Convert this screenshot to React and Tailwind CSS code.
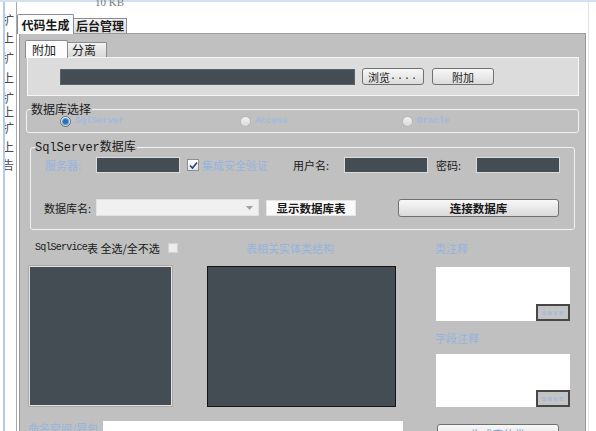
import React from "react";

function Radio({ checked }) {
  if (checked) {
    return (
      <span className="w-[11px] h-[11px] rounded-full border border-[#6b6f75] bg-linear-to-b from-[#f7f7f7] to-[#d2d2d2] flex items-center justify-center shrink-0">
        <span className="w-[5px] h-[5px] rounded-full bg-[#1f74c4] shadow-[0_0_0_1px_#5a9ad6]" />
      </span>
    );
  }
  return (
    <span className="w-[11px] h-[11px] rounded-full border border-[#b4b6b8] bg-linear-to-b from-[#f2f2f2] to-[#dadada] shrink-0" />
  );
}

function Save() {
  return (
    <div className="absolute right-0 bottom-0 w-[34px] h-[17px] border-2 border-[#474747] bg-[#c4c4c4] flex items-center justify-center font-['Liberation_Mono',monospace] text-[8px] font-bold tracking-[1px] text-[#9fbbe0]">
      save
    </div>
  );
}

const DarkBox = "bg-[#444d53]";

export default function App() {
  return (
    <div className="w-[596px] h-[431px] overflow-hidden bg-white flex flex-col font-['Noto_Sans_CJK_SC',sans-serif] text-[#1a1a1a]">
      <div className="h-[2px] bg-[#d4e2f0] shrink-0" />
      <div className="flex flex-1 min-h-0">
        {/* left strip of the window behind */}
        <div className="w-[17px] flex shrink-0">
          <div className="w-[3px]" />
          <div className="w-[2px] bg-[#b3cde8]" />
          <div className="w-[11px] overflow-hidden text-[12px] leading-[12px] text-[#4a4a4a] flex flex-col">
            <div className="mt-[12px] -ml-[3px]">扩</div>
            <div className="mt-[6px] -ml-[3px]">上</div>
            <div className="mt-[8px] -ml-[3px]">扩</div>
            <div className="mt-[8px] -ml-[3px]">上</div>
            <div className="mt-[8px] -ml-[3px]">扩</div>
            <div className="mt-[2px] -ml-[3px]">上</div>
            <div className="mt-[4px] -ml-[3px]">扩</div>
            <div className="mt-[7px] -ml-[3px]">上</div>
            <div className="mt-[6px] -ml-[3px]">告</div>
          </div>
          <div className="w-[1px] bg-[#a9a9a9]" />
        </div>

        {/* main */}
        <div className="w-[569px] flex flex-col shrink-0">
          <div className="h-[12px] shrink-0">
            <div className="ml-[78px] -mt-[6px] text-[11px] leading-[12px] text-[#7a7a7a] font-['Liberation_Serif',serif]">
              10 KB
            </div>
          </div>
          {/* outer tabs */}
          <div className="h-[19px] flex items-end relative z-10 shrink-0">
            <div className="w-[57px] h-[20px] -mb-px bg-[#fcfcfc] border border-b-0 border-[#898c95] rounded-t-[2px] flex items-center justify-center text-[12px] font-bold">
              代码生成
            </div>
            <div className="w-[53px] h-[15px] bg-linear-to-b from-[#f3f3f3] to-[#dcdcdc] border border-b-0 border-l-0 border-[#898c95] flex items-center justify-center text-[12px] font-bold">
              后台管理
            </div>
          </div>

          {/* panel */}
          <div className="ml-[2px] w-[567px] flex-1 bg-[#c0c0c0] border border-b-0 border-[#9a9a9a] flex flex-col text-[11px] leading-[14px]">
            {/* inner tab control */}
            <div className="mt-[6px] ml-[5px] flex flex-col">
              <div className="h-[17px] flex items-end relative z-10">
                <div className="w-[43px] h-[18px] -mb-px bg-[#fcfcfc] border border-b-0 border-[#898c95] rounded-t-[2px] flex items-center pl-[6px] text-[12px]">
                  附加
                </div>
                <div className="w-[39px] h-[15px] bg-linear-to-b from-[#f3f3f3] to-[#d8d8d8] border border-b-0 border-l-0 border-[#898c95] flex items-center pl-[4px] text-[12px]">
                  分离
                </div>
              </div>
              <div className="ml-[2px] w-[552px] h-[39px] bg-[#dcdcdc] border border-[#f7f7f7] flex items-center">
                <div className={`ml-[32px] w-[295px] h-[16px] ${DarkBox} border border-[#5b6368]`} />
                <div className="ml-[7px] w-[62px] h-[17px] rounded-[3px] border border-[#707070] bg-linear-to-b from-[#f7f7f7] to-[#dcdcdc] flex items-center justify-center text-[11px]">
                  浏览<span className="font-['Liberation_Mono',monospace] tracking-[1px] text-[10px]">....</span>
                </div>
                <div className="ml-[8px] w-[62px] h-[17px] rounded-[3px] border border-[#707070] bg-linear-to-b from-[#f7f7f7] to-[#dcdcdc] flex items-center justify-center text-[11px]">
                  附加
                </div>
              </div>
            </div>

            {/* group 1 */}
            <div className="mt-[13px] ml-[6px] w-[553px] h-[24px] relative border border-[#f2f2f2] rounded-[3px] flex items-center shrink-0">
              <div className="absolute left-[4px] -top-[8px] bg-[#c0c0c0] pr-[1px] text-[12px] leading-[14px]">
                数据库选择
              </div>
              <div className="ml-[33px] w-[180px] flex items-center">
                <Radio checked />
                <span className="ml-[4px] font-['Liberation_Mono',monospace] text-[9.5px] font-bold tracking-[-0.3px] text-[#9fbbe0]">SqlServer</span>
              </div>
              <div className="w-[162px] flex items-center">
                <Radio />
                <span className="ml-[4px] font-['Liberation_Mono',monospace] text-[9.5px] font-bold tracking-[-0.3px] text-[#9fbbe0]">Access</span>
              </div>
              <div className="flex items-center">
                <Radio />
                <span className="ml-[4px] font-['Liberation_Mono',monospace] text-[9.5px] font-bold tracking-[-0.3px] text-[#9fbbe0]">Oracle</span>
              </div>
            </div>

            {/* group 2 */}
            <div className="mt-[14px] ml-[10px] w-[545px] h-[83px] relative border border-[#f2f2f2] rounded-[3px] flex flex-col shrink-0">
              <div className="absolute left-[4px] -top-[9px] bg-[#c0c0c0] pr-[1px] text-[12px] leading-[14px] flex items-baseline">
                <span className="font-['Liberation_Mono',monospace]">SqlServer</span>
                <span>数据库</span>
              </div>
              <div className="mt-[9px] h-[16px] flex items-center">
                <span className="ml-[14px] w-[51px] text-[#94b4df]">服务器:</span>
                <div className={`w-[84px] h-[16px] ${DarkBox} border border-[#dcdcdc]`} />
                <div className="ml-[7px] w-[12px] h-[12px] border border-[#8e8f8f] bg-linear-to-b from-[#ffffff] to-[#e6e6e6] flex items-center justify-center">
                  <svg width="9" height="9" viewBox="0 0 9 9">
                    <path d="M1 4.5 L3.5 7 L8 1.5" fill="none" stroke="#23427e" strokeWidth="1.6" />
                  </svg>
                </div>
                <span className="ml-[3px] w-[91px] text-[#94b4df]">集成安全验证</span>
                <span className="w-[51px]">用户名:</span>
                <div className={`w-[84px] h-[16px] ${DarkBox} border border-[#dcdcdc]`} />
                <span className="ml-[8px] w-[40px]">密码:</span>
                <div className={`w-[84px] h-[16px] ${DarkBox} border border-[#dcdcdc]`} />
              </div>
              <div className="mt-[25px] h-[19px] flex items-center">
                <span className="ml-[13px] w-[52px]">数据库名:</span>
                <div className="w-[163px] h-[17px] bg-[#f0f0f0] border border-[#e2e2e2] flex items-center justify-end pr-[5px]">
                  <svg width="7" height="4" viewBox="0 0 7 4">
                    <path d="M0 0 L7 0 L3.5 4 Z" fill="#a0a0a0" />
                  </svg>
                </div>
                <div className="ml-[7px] w-[90px] h-[16px] bg-[#fafafa] border border-[#e6e6e6] flex items-center justify-center font-bold text-[11.5px]">
                  显示数据库表
                </div>
                <div className="ml-[42px] w-[161px] h-[18px] rounded-[3px] border border-[#707070] bg-linear-to-b from-[#f8f8f8] to-[#d9d9d9] flex items-center justify-center font-bold text-[11.5px]">
                  连接数据库
                </div>
              </div>
            </div>

            {/* labels row */}
            <div className="mt-[11px] h-[14px] flex items-center shrink-0">
              <span className="ml-[15px] w-[133px] flex items-center">
                <span className="font-['Liberation_Mono',monospace] text-[10px] tracking-[-0.8px]">SqlService</span>
                <span>表 全选/全不选</span>
              </span>
              <div className="w-[10px] h-[10px] bg-[#ececec] border border-[#d2d2d2]" />
              <span className="ml-[68px] w-[189px] text-[#94b4df]">表相关实体类结构</span>
              <span className="text-[#94b4df]">类注释</span>
            </div>

            {/* boxes row */}
            <div className="mt-[11px] h-[141px] flex items-start shrink-0">
              <div className={`ml-[9px] w-[143px] h-[140px] ${DarkBox} border border-[#e2e2e2] shadow-[0_0_0_1px_#a9a9a9]`} />
              <div className={`ml-[35px] w-[189px] h-[141px] ${DarkBox} border border-[#141414]`} />
              <div className="ml-[40px] w-[134px] flex flex-col">
                <div className="mt-[1px] h-[54px] bg-white relative">
                  <Save />
                </div>
                <div className="h-[33px] flex items-center -ml-[1px] text-[#94b4df]">字段注释</div>
                <div className="h-[53px] bg-white relative">
                  <Save />
                </div>
              </div>
            </div>

            {/* bottom row */}
            <div className="mt-[14px] flex items-start shrink-0">
              <span className="ml-[8px] w-[75px] text-[#94b4df]">命名空间/导包</span>
              <div className="w-[300px] h-[20px] bg-white" />
              <div className="ml-[34px] mt-[3px] w-[122px] h-[20px] rounded-[3px] border border-[#707070] bg-linear-to-b from-[#f8f8f8] to-[#dcdcdc] flex items-center justify-center text-[#7f9cc6]">
                生成实体类
              </div>
            </div>
          </div>
        </div>

        <div className="flex-1 flex">
          <div className="w-[2px]" />
          <div className="w-[1px] bg-[#e4e4e4]" />
        </div>
      </div>
    </div>
  );
}
